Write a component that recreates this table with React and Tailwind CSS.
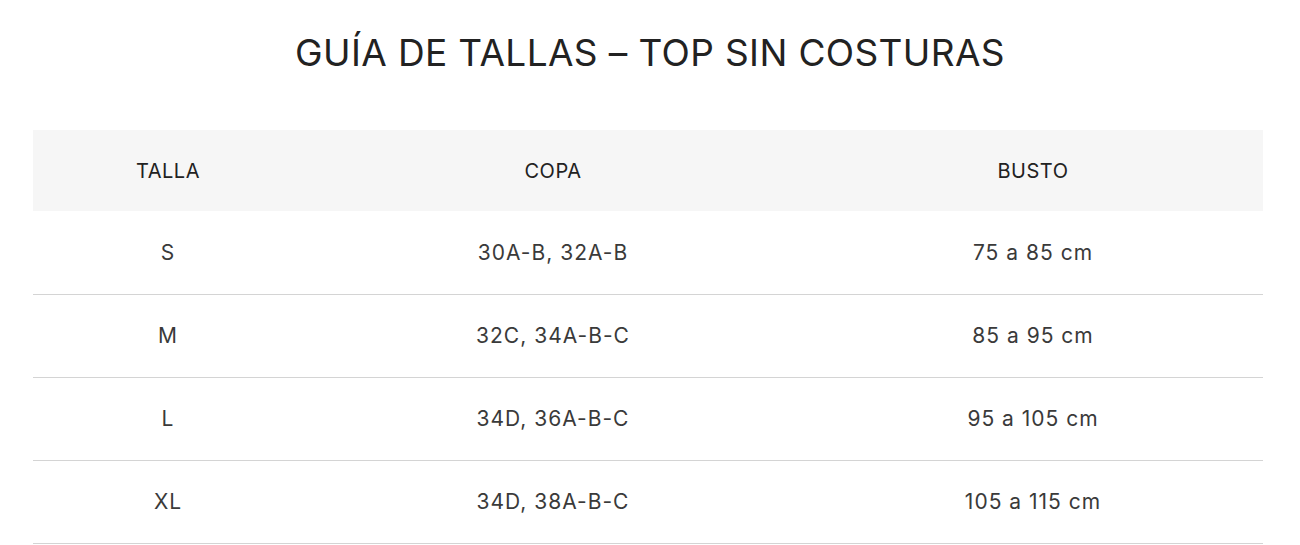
const rows = [
  { talla: 'S', copa: '30A-B, 32A-B', busto: '75 a 85 cm' },
  { talla: 'M', copa: '32C, 34A-B-C', busto: '85 a 95 cm' },
  { talla: 'L', copa: '34D, 36A-B-C', busto: '95 a 105 cm' },
  { talla: 'XL', copa: '34D, 38A-B-C', busto: '105 a 115 cm' },
];

export default function App() {
  return (
    <div className="min-h-screen bg-white text-[#3a3a3a] font-['Inter',sans-serif]">
      <h1 className="pt-[32px] text-center text-[37px] leading-[42px] font-normal text-[#222] tracking-[0.01em]">
        GUÍA DE TALLAS – TOP SIN COSTURAS
      </h1>
      <div className="ml-[33px] mt-[56px] w-[1230px]">
        <table className="w-full table-fixed border-collapse">
          <colgroup>
            <col className="w-[270px]" />
            <col className="w-[500px]" />
            <col />
          </colgroup>
          <thead className="bg-[#f6f6f6]">
            <tr className="h-[81px]">
              <th className="font-normal text-[20px] tracking-[0.5px] text-[#222]">TALLA</th>
              <th className="font-normal text-[20px] tracking-[0.5px] text-[#222]">COPA</th>
              <th className="font-normal text-[20px] tracking-[0.5px] text-[#222]">BUSTO</th>
            </tr>
          </thead>
          <tbody>
            {rows.map((r) => (
              <tr key={r.talla} className="h-[83px] border-b border-[#d4d4d4]">
                <td className="text-center text-[21px] tracking-[1px]">{r.talla}</td>
                <td className="text-center text-[21px] tracking-[1px]">{r.copa}</td>
                <td className="text-center text-[21px] tracking-[1px]">{r.busto}</td>
              </tr>
            ))}
          </tbody>
        </table>
      </div>
    </div>
  );
}
